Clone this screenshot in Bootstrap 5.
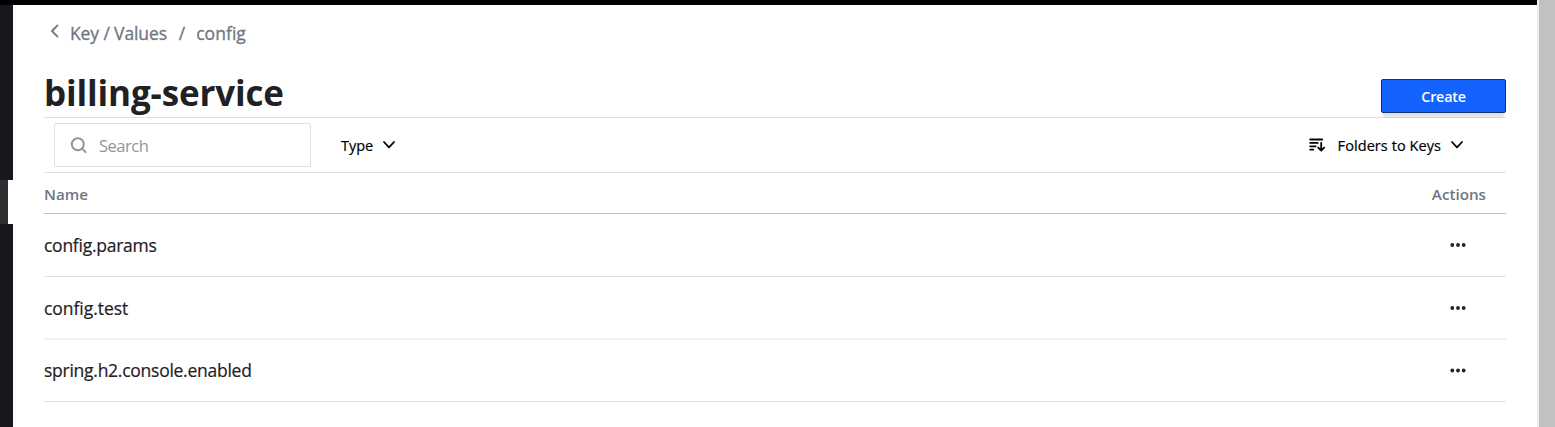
<!DOCTYPE html>
<html lang="en">
<head>
<meta charset="utf-8">
<meta name="viewport" content="width=device-width, initial-scale=1">
<title>billing-service - Key / Values</title>
<link href="https://cdn.jsdelivr.net/npm/bootstrap@5.3.0/dist/css/bootstrap.min.css" rel="stylesheet">
<style>
  body { font-family: "Open Sans", "Noto Sans", sans-serif; color: #1f2124; background: #fff; height: 427px; overflow: hidden; }
  .topbar { height: 5px; background: #000; }
  .shell { height: 422px; }
  .side { width: 13px; background: #17181c; }
  .side-active { height: 44px; margin-top: 175px; background: #fff; }
  .side-active div { width: 8px; height: 44px; background: #2d2f33; }
  .track { width: 18px; background: #c1c1c1; border-left: 2px solid #f0f0f0; }
  .page { padding: 0 31px; }
  .crumbs { height: 57px; padding-left: 5px; font-size: 17.5px; color: #6f7682; -webkit-text-stroke: .3px #6f7682; }
  .crumbs span { line-height: 57px; white-space: pre; letter-spacing: -.12px; }
  .crumbs svg { margin: 18px 9px 0 0; }
  .crumbs .sep { margin: 0 10px 0 12px; }
  .crumbs .sep + span { letter-spacing: .05px; margin-left: 1px; }
  .head { height: 56px; border-bottom: 1px solid #dcdfe6; }
  .head h1 { font-size: 35px; font-weight: 700; line-height: 50px; margin: 6px 0 0; letter-spacing: -.15px; }
  .create { width: 125px; height: 34px; margin-top: 17px; background: #1563ff; border: 1px solid #0f3178; border-radius: 2px; color: #fff; font-size: 14.3px; font-weight: 600; line-height: 33px; letter-spacing: -.2px; padding: 0; box-shadow: 0 6px 2px -2px rgba(0,0,0,.12); }
  .filters { height: 55px; border-bottom: 1px solid #dcdfe6; padding: 0 42px 0 10px; color: #000; font-size: 14.5px; -webkit-text-stroke: .2px #000; }
  .filters > span { padding-top: 2px; }
  .filters > svg:last-child, .type + svg { margin-left: 9px; }
  .type { margin-left: 30px; }
  .sort { margin-left: 12px; letter-spacing: .07px; }
  .search { width: 257px; height: 44px; border: 1px solid #dcdfe6; border-radius: 2px; padding-left: 15px; color: #8e96a3; font-size: 16.5px; letter-spacing: -.5px; -webkit-text-stroke: 0; }
  .search span { margin-left: 11px; padding-top: 2px; }
  .thead { height: 41px; border-bottom: 1px solid #bac1cc; padding: 2px 20px 0 0; font-size: 15.2px; font-weight: 600; color: #6f7682; }
  .item { height: 63px; border-bottom: 1px solid #dcdfe6; padding-right: 40px; font-size: 17.5px; letter-spacing: -.26px; -webkit-text-stroke: .2px #1f2124; }
  .item.mid { border-bottom: 2px solid #edeff3; }
  .item.mid span { padding-top: 2px; letter-spacing: -.05px; }
  .item.last-item { height: 62px; }
</style>
<script src="https://cdn.jsdelivr.net/npm/bootstrap@5.3.0/dist/js/bootstrap.bundle.min.js"></script>
</head>
<body class="d-flex">
<div class="flex-grow-1">
  <div class="topbar"></div>
  <div class="shell d-flex">
    <nav class="side"><div class="side-active"><div></div></div></nav>
    <main class="page flex-grow-1">
      <div class="crumbs d-flex">
        <svg width="12" height="16" viewBox="0 0 12 16" fill="none" stroke="#6f7682" stroke-width="1.8" stroke-linecap="round" stroke-linejoin="round"><path d="M8.5 2.4 3 8l5.500 5.600"/></svg>
        <span>Key / Values</span>
        <span class="sep">/</span>
        <span>config</span>
      </div>
      <div class="head d-flex justify-content-between">
        <h1 class="text-nowrap">billing-service</h1>
        <button class="create btn" type="button">Create</button>
      </div>
      <div class="filters d-flex align-items-center text-nowrap">
        <div class="search d-flex align-items-center">
          <svg width="18" height="18" viewBox="0 0 18 18" fill="none" stroke="#8e96a3" stroke-width="2" stroke-linecap="round"><circle cx="7.800" cy="8.300" r="6"/><path d="m12.400 12.900 3.100 3.100"/></svg>
          <span>Search</span>
        </div>
        <span class="type">Type</span>
        <svg width="14" height="10" viewBox="0 0 14 10" fill="none" stroke="#000" stroke-width="1.8" stroke-linecap="round" stroke-linejoin="round"><path d="m2 2 5 5.400L12 2"/></svg>
        <svg class="ms-auto" width="17" height="14" viewBox="0 0 17 14" fill="none" stroke="#000" stroke-width="1.8" stroke-linecap="round" stroke-linejoin="round"><path d="M1.200 1.500h12M1.200 4.900h7.500M1.200 8.300h5.500M1.200 11.700h3M12.200 5v7.400M9.200 9.600l3 2.900 3-2.900"/></svg>
        <span class="sort">Folders to Keys</span>
        <svg width="14" height="10" viewBox="0 0 14 10" fill="none" stroke="#000" stroke-width="1.8" stroke-linecap="round" stroke-linejoin="round"><path d="m2 2 5 5.400L12 2"/></svg>
      </div>
      <div class="thead d-flex align-items-center justify-content-between"><span>Name</span><span>Actions</span></div>
      <div class="item d-flex align-items-center justify-content-between"><span>config.params</span><svg width="16" height="6" viewBox="0 0 16 6" fill="#1f2124"><circle cx="2.300" cy="3" r="1.900"/><circle cx="8" cy="3" r="1.900"/><circle cx="13.700" cy="3" r="1.900"/></svg></div>
      <div class="item mid d-flex align-items-center justify-content-between"><span>config.test</span><svg width="16" height="6" viewBox="0 0 16 6" fill="#1f2124"><circle cx="2.300" cy="3" r="1.900"/><circle cx="8" cy="3" r="1.900"/><circle cx="13.700" cy="3" r="1.900"/></svg></div>
      <div class="item last-item d-flex align-items-center justify-content-between"><span>spring.h2.console.enabled</span><svg width="16" height="6" viewBox="0 0 16 6" fill="#1f2124"><circle cx="2.300" cy="2.500" r="1.900"/><circle cx="8" cy="2.500" r="1.900"/><circle cx="13.700" cy="2.500" r="1.900"/></svg></div>
    </main>
  </div>
</div>
<div class="track"></div>
</body>
</html>
